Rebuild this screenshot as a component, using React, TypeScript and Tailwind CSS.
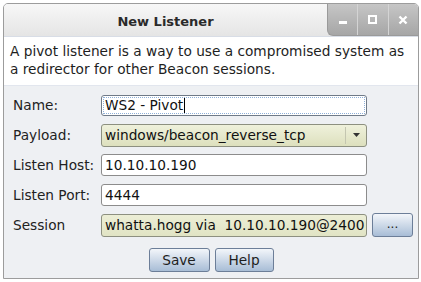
import React from "react";

const font = { fontFamily: '"DejaVu Sans", sans-serif' };

function Row({ label, children }: { label: string; children: React.ReactNode }) {
  return (
    <div className="flex items-center h-[22px]">
      <div className="w-[97px] pl-[9px] text-[13.7px] text-[#222]">{label}</div>
      {children}
    </div>
  );
}

export default function App() {
  return (
    <div className="w-[421px] h-[282px] bg-white p-[3px] pb-[3px]" style={font}>
      <div className="w-[416px] h-[276px] border border-[#9c9c9c] rounded-t-[5px] flex flex-col overflow-hidden bg-[#eef0f3]">
        {/* title bar */}
        <div className="h-[33px] flex bg-gradient-to-b from-[#f7f7f7] to-[#e5e5e5] border-b border-[#d8dde6]">
          <div className="flex-1 flex items-center justify-center text-[13px] font-bold text-[#2a2a2a] pt-[3px]">
            New Listener
          </div>
          <div className="w-[91px] h-[32px] flex rounded-bl-[6px] overflow-hidden bg-gradient-to-b from-[#c6c6c6] to-[#a6a6a6] border-b border-l border-[#9a9a9a]">
            <div className="flex-1 flex items-end justify-center pb-[11px] border-r border-[#d4d4d4]">
              <div className="w-[8px] h-[3px] bg-white" />
            </div>
            <div className="flex-1 flex items-center justify-center border-r border-[#d4d4d4]">
              <div className="w-[9px] h-[9px] border-2 border-white" />
            </div>
            <div className="flex-1 flex items-center justify-center">
              <svg width="10" height="10" viewBox="0 0 10 10">
                <path d="M1.5 1.5 L8.5 8.5 M8.5 1.5 L1.5 8.5" stroke="white" strokeWidth="2.4" />
              </svg>
            </div>
          </div>
        </div>
        {/* description */}
        <div className="bg-white pl-[6px] pr-[9px] pt-[5px] pb-[7px] text-[13.7px] leading-[18px] text-[#1e1e1e] border-b border-[#e2e6ee]">
          A pivot listener is a way to use a compromised system as a redirector for other Beacon sessions.
        </div>
        {/* form */}
        <div className="flex flex-col gap-[8px] pt-[8px]">
          <Row label="Name:">
            <div className="w-[266px] h-[21px] bg-white border border-[#6f7a88] rounded-[3px] p-[1px]">
              <div className="h-full border border-dotted border-[#8fb0d8] flex items-center pl-[1px] text-[13.7px] text-[#111]">
                WS2 - Pivot<span className="inline-block w-px h-[15px] bg-black ml-[1px]" />
              </div>
            </div>
          </Row>
          <Row label="Payload:">
            <div className="w-[266px] h-[23px] flex bg-gradient-to-b from-[#eff1dc] to-[#dde0bd] border border-[#8d9080] rounded-[3px]">
              <div className="flex-1 flex items-center pl-[3px] text-[13.7px] text-[#111]">windows/beacon_reverse_tcp</div>
              <div className="w-[21px] my-[2px] flex items-center justify-center border-l border-[#c4c6b0]">
                <svg width="7" height="4" viewBox="0 0 7 4">
                  <path d="M0 0 L7 0 L3.5 4 Z" fill="#333" />
                </svg>
              </div>
            </div>
          </Row>
          <Row label="Listen Host:">
            <div className="w-[266px] h-[22px] bg-white border border-[#8c8c8c] rounded-[3px] flex items-center pl-[3px] text-[13.7px] text-[#111]">
              10.10.10.190
            </div>
          </Row>
          <Row label="Listen Port:">
            <div className="w-[266px] h-[22px] bg-white border border-[#8c8c8c] rounded-[3px] flex items-center pl-[3px] text-[13.7px] text-[#111]">
              4444
            </div>
          </Row>
          <Row label="Session">
            <div className="w-[266px] h-[23px] bg-gradient-to-b from-[#eceed6] to-[#e1e4c4] border border-[#8d9080] rounded-[3px] flex items-center pl-[3px] text-[13.7px] text-[#111] whitespace-pre overflow-hidden">
              whatta.hogg via  10.10.10.190@2400
            </div>
            <div className="ml-[5px] w-[41px] h-[24px] rounded-[3px] border border-[#6c7e98] bg-gradient-to-b from-[#f3f6fa] to-[#a8bdd6] flex items-center justify-center text-[12px] text-[#222] leading-none pb-[3px]">
              ...
            </div>
          </Row>
        </div>
        <div className="flex justify-center gap-[5px] mt-[12px]">
          <div className="w-[61px] h-[24px] rounded-[3px] border border-[#6c7e98] bg-gradient-to-b from-[#f3f6fa] to-[#a8bdd6] flex items-center justify-center text-[13.7px] text-[#1e1e1e]">
            Save
          </div>
          <div className="w-[59px] h-[24px] rounded-[3px] border border-[#6c7e98] bg-gradient-to-b from-[#f3f6fa] to-[#a8bdd6] flex items-center justify-center text-[13.7px] text-[#1e1e1e]">
            Help
          </div>
        </div>
      </div>
    </div>
  );
}
